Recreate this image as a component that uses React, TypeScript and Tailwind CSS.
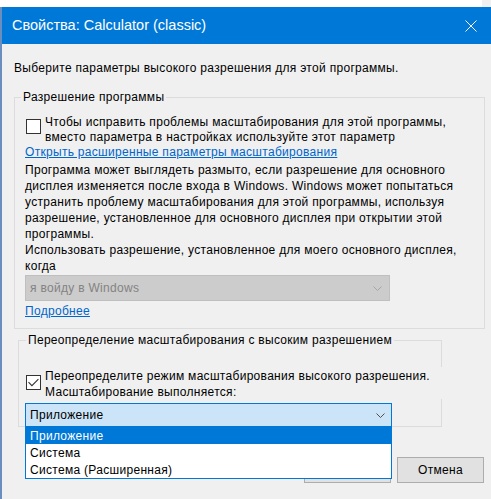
import React from "react";

const Chevron = ({ color }: { color: string }) => (
	<svg width="9" height="5" viewBox="0 0 9 5" fill="none">
		<path d="M0.5 0.5 L4.5 4.5 L8.5 0.5" stroke={color} strokeWidth="1" />
	</svg>
);

const CheckBox = ({ checked }: { checked?: boolean }) => (
	<div className="w-[15px] h-[15px] border border-[#333333] bg-white flex items-center justify-center shrink-0">
		{checked && (
			<svg width="11" height="9" viewBox="0 0 11 9" fill="none">
				<path d="M0.5 4.2 L3.9 7.6 L10.4 1.1" stroke="#333333" strokeWidth="1.1" />
			</svg>
		)}
	</div>
);

const Button = ({ label }: { label: string }) => (
	<div className="w-[87px] h-[26px] border border-[#adadad] bg-[#e1e1e1] flex items-center justify-center">
		{label}
	</div>
);

const ScalingOptions = ["Приложение", "Система", "Система (Расширенная)"];

const App: React.FC = () => {
	return (
		<div className="w-[491px] h-[499px] overflow-hidden bg-[#f0f0f0] flex flex-col text-[12px] tracking-[0.3px] text-black [font-family:'Liberation_Sans',Arial,sans-serif]">
			{/* strip of the window behind the dialog */}
			<div className="h-[7px] bg-white flex shrink-0">
				<div className="ml-auto w-[9px] bg-[#f0f0f0]" />
			</div>

			<div className="flex flex-1">
				<div className="w-[2px] bg-[#6a8fbf] shrink-0" />
				<div className="flex-1 flex flex-col">
					{/* title bar */}
					<div className="h-[37px] bg-[#0078d7] flex items-center pl-[10px] pr-[14px] text-white text-[14.5px] tracking-normal shrink-0">
						<span className="flex-1">Свойства: Calculator (classic)</span>
						<svg width="12" height="12" viewBox="0 0 12 12" fill="none">
							<path d="M0.5 0.5 L11.5 11.5 M11.5 0.5 L0.5 11.5" stroke="white" strokeWidth="1" />
						</svg>
					</div>

					<div className="flex-1 flex flex-col pl-[12px] pr-[6px] pt-[16px]">
						<div className="leading-4">Выберите параметры высокого разрешения для этой программы.</div>

						{/* program DPI group */}
						<fieldset className="mt-[13px] border border-[#dcdcdc] p-0 m-0 min-w-0">
							<legend className="ml-[6px] px-[2px] leading-4">Разрешение программы</legend>
							<div className="pl-[10px] pb-[9px]">
								<div className="flex pt-[10px] leading-[15px]">
									<div className="ml-[1px] mt-[4px]">
										<CheckBox />
									</div>
									<div className="ml-[4px]">
										Чтобы исправить проблемы масштабирования для этой программы,
										<br />
										вместо параметра в настройках используйте этот параметр
									</div>
								</div>
								<div className="leading-[15px] text-[#0066cc] underline">Открыть расширенные параметры масштабирования</div>
								<div className="mt-[2px] leading-4 whitespace-nowrap">
									Программа может выглядеть размыто, если разрешение для основного
									<br />
									дисплея изменяется после входа в Windows. Windows может попытаться
									<br />
									устранить проблему масштабирования для этой программы, используя
									<br />
									разрешение, установленное для основного дисплея при открытии этой
									<br />
									программы.
									<br />
									Использовать разрешение, установленное для моего основного дисплея,
									<br />
									когда
								</div>
								<div className="mt-[1px] w-[365px] h-[26px] border border-[#bfbfbf] bg-[#cccccc] flex items-center pl-[4px] pr-[7px] text-[#838383]">
									<span className="flex-1">я войду в Windows</span>
									<Chevron color="#a6a6a6" />
								</div>
								<div className="mt-[3px] leading-[15px] text-[#0066cc] underline">Подробнее</div>
							</div>
						</fieldset>

						{/* high DPI override group */}
						<fieldset className="mt-[3px] ml-[4px] w-[424px] border border-[#dcdcdc] p-0 m-0 min-w-0">
							<legend className="ml-[7px] px-[2px] leading-4 whitespace-nowrap">
								Переопределение масштабирования с высоким разрешением
							</legend>
							<div className="flex flex-col">
								<div className="relative flex mt-[20px] leading-4">
									<div className="ml-[7px] mt-[7px]">
										<CheckBox checked />
									</div>
									<div className="ml-[4px] whitespace-nowrap">
										Переопределите режим масштабирования высокого разрешения.
										<br />
										Масштабирование выполняется:
									</div>
									<div className="absolute right-[-1px] top-[-1px] w-[1px] h-[32px] bg-[#f0f0f0]" />
								</div>
								<div className="relative mt-[3px] ml-[6px] w-[367px] h-[24px] -mb-[1px]">
									<div className="h-full border border-[#0078d7] bg-[#cce4f7] flex items-center pl-[4px] pr-[6px]">
										<span className="flex-1">Приложение</span>
										<Chevron color="#505050" />
									</div>
									{/* open list */}
									<div className="absolute left-0 top-full w-full z-10 bg-white border-x border-b border-[#0078d7] flex flex-col">
										{ScalingOptions.map((option, index) => (
											<div
												key={option}
												className={
													index === 0
														? "h-[17px] flex items-center pl-[4px] bg-[#0078d7] text-white"
														: "h-[17px] flex items-center pl-[4px]"
												}
											>
												{option}
											</div>
										))}
									</div>
								</div>
							</div>
						</fieldset>

						<div className="mt-[30px] flex justify-end gap-[6px] mr-[1px]">
							<Button label="ОК" />
							<Button label="Отмена" />
						</div>
					</div>
				</div>
			</div>
		</div>
	);
};

export default App;
